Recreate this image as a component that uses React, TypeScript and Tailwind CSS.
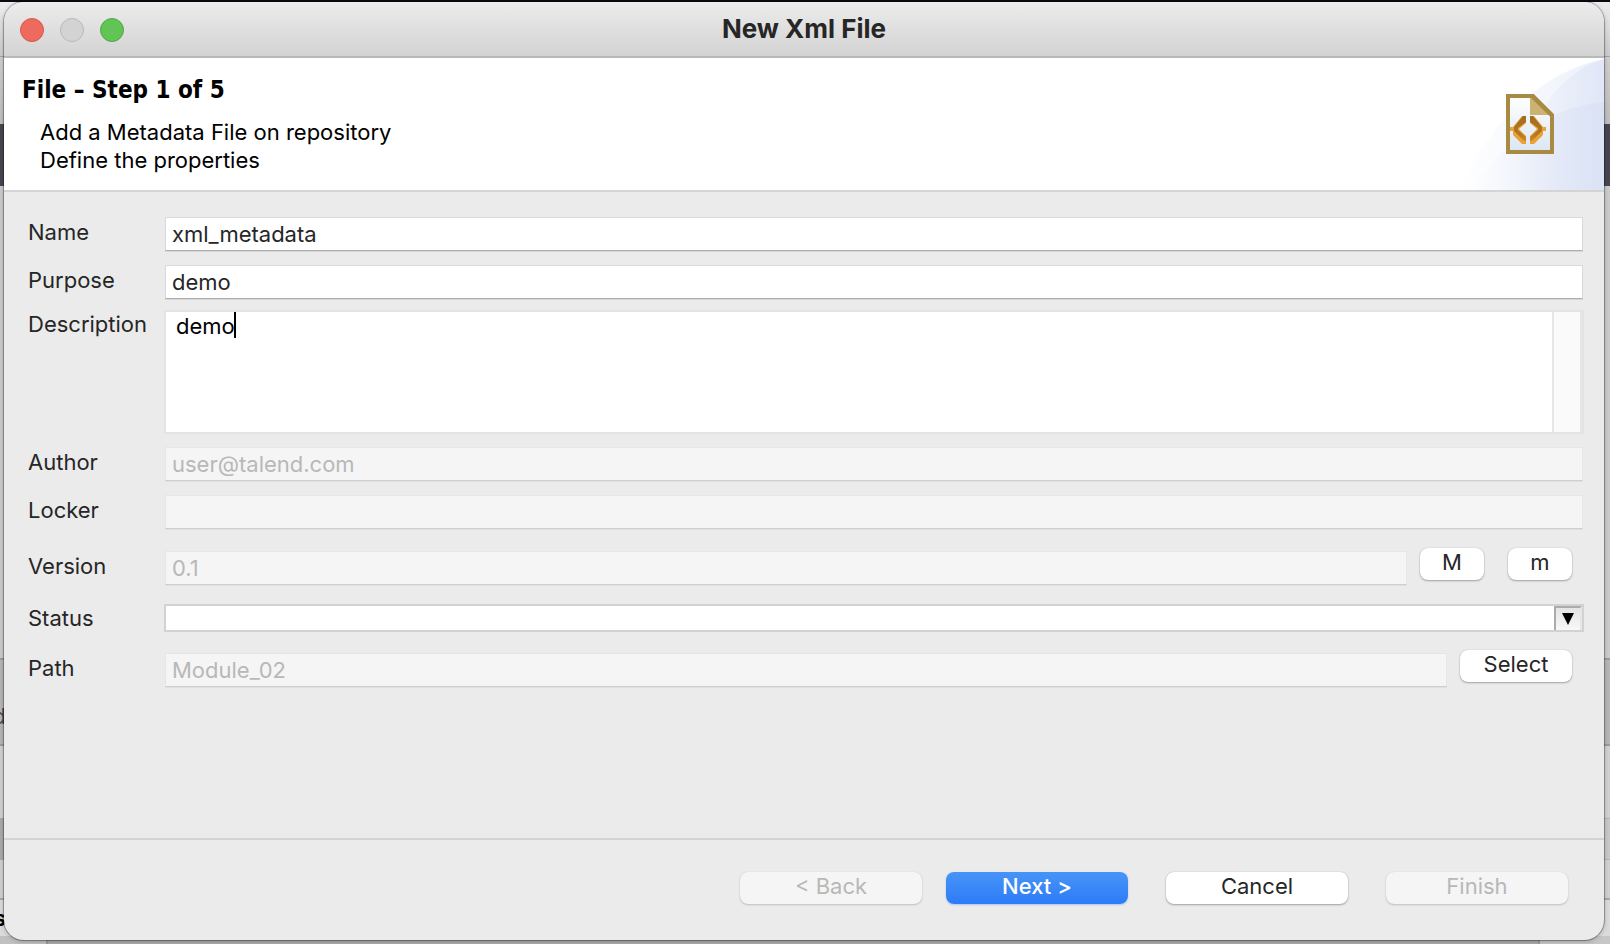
import type { ButtonHTMLAttributes, InputHTMLAttributes, ReactNode } from "react";
import { clsx } from "clsx";

type RowProps = { id: string; label: string; align?: "top" | "bottom" | "field"; className?: string; children: ReactNode };

function Row({ id, label, align = "field", className, children }: RowProps) {
  return (
    <div className={clsx("grid grid-cols-[136px_minmax(0,1fr)]", align === "top" ? "items-start" : "items-end", className)}>
      <label htmlFor={id} className={clsx("text-[22px] leading-7 text-[#262626]", align === "field" && "pb-[5px]")}>
        {label}
      </label>
      {children}
    </div>
  );
}

function TextField({ className, ...props }: InputHTMLAttributes<HTMLInputElement>) {
  return (
    <input
      type="text"
      className={clsx(
        "mx-px h-[34px] min-w-0 border border-[#d9d9d9] border-b-[#adadad] bg-white px-1.5 text-[22px] text-[#262626] shadow-[0_1px_0_#d6d6d6] outline-none",
        "disabled:border-[#e6e6e6] disabled:border-b-[#cfcfcf] disabled:bg-[#f5f5f5] disabled:text-[#b8b8b8] disabled:shadow-[0_1px_0_#e0e0e0]",
        className,
      )}
      {...props}
    />
  );
}

function Button({ primary = false, className, ...props }: ButtonHTMLAttributes<HTMLButtonElement> & { primary?: boolean }) {
  return (
    <button
      type="button"
      className={clsx(
        "h-8 shrink-0 rounded-lg pb-1 text-[22px] leading-7",
        primary
          ? "bg-linear-to-b from-[#4794f8] to-[#2d7bf6] font-medium text-white shadow-[0_1px_2px_rgba(45,123,246,0.35)]"
          : "bg-white text-[#262626] shadow-[0_1px_2px_rgba(0,0,0,0.3),0_0_1px_rgba(0,0,0,0.25)] disabled:bg-[#f5f5f5] disabled:text-[#b8b8b8] disabled:shadow-[0_1px_2px_rgba(0,0,0,0.18),0_0_1px_rgba(0,0,0,0.15)]",
        className,
      )}
      {...props}
    />
  );
}

function XmlFileIcon() {
  return (
    <svg width="48" height="60" viewBox="0 0 48 60" aria-hidden="true">
      <defs>
        <linearGradient id="sheet" x1="0" y1="0" x2="0" y2="1">
          <stop offset="0" stopColor="#fff" />
          <stop offset="1" stopColor="#dbe5f3" />
        </linearGradient>
        <linearGradient id="chevron" x1="0" y1="0" x2="0" y2="1">
          <stop offset="0" stopColor="#a06d20" />
          <stop offset="0.7" stopColor="#b4761c" />
          <stop offset="1" stopColor="#d08c22" />
        </linearGradient>
      </defs>
      <path d="M2 2H27L46 21V58H2Z" fill="url(#sheet)" stroke="#a98a43" strokeWidth="4" />
      <path d="M24 4H27L44 21H24Z" fill="#c9b272" />
      <path d="M26 2L46 21.500" stroke="#a98a43" strokeWidth="4" />
      <path
        d="M20 22V29L13 35L20 42V50H16L7 41V37H4V33H7L16 22ZM24 22V29L31 35L24 42V50H28L37 41V37H40V33H37L28 22Z"
        fill="#e9a33a"
      />
      <path d="M20 22V28L12 34V36L20 43V47H18L8 37V33L17 22ZM24 22V28L32 34V36L24 43V47H26L36 37V33L27 22Z" fill="url(#chevron)" />
    </svg>
  );
}

function HeaderSwoosh() {
  return (
    <svg className="absolute inset-y-0 right-0 h-full w-[152px]" viewBox="0 0 152 132" preserveAspectRatio="none" aria-hidden="true">
      <defs>
        <linearGradient id="outer" x1="0" y1="0" x2="1" y2="0">
          <stop offset="0" stopColor="#dfe6f6" stopOpacity="0" />
          <stop offset="1" stopColor="#dfe6f6" stopOpacity="0.6" />
        </linearGradient>
        <linearGradient id="inner" x1="0" y1="0" x2="1" y2="0">
          <stop offset="0" stopColor="#d5def4" stopOpacity="0" />
          <stop offset="1" stopColor="#d5def4" stopOpacity="0.5" />
        </linearGradient>
      </defs>
      <path d="M8 132C34 70 86 14 152 1V132Z" fill="url(#outer)" />
      <path d="M62 132C74 76 96 18 152 1V132Z" fill="url(#inner)" />
      <path d="M20 132C56 80 94 50 152 44V132Z" fill="url(#inner)" />
    </svg>
  );
}

function Backdrop() {
  return (
    <div aria-hidden="true" className="absolute inset-0 flex flex-col overflow-hidden bg-[#c9c9c9]">
      <div className="h-0.5 shrink-0 bg-[#0d0811]" />
      <div className="h-[55px] shrink-0 border-b border-[#a2a2a2] bg-linear-to-b from-[#ededed] to-[#cbcbcb]" />
      <div className="h-[67px] shrink-0 bg-linear-to-b from-[#cfcfcf] to-[#bdbdbd]" />
      <div className="h-[62px] shrink-0 bg-[#454650]" />
      <div className="h-[472px] shrink-0 bg-[#cbcbcb]" />
      <div className="flex h-[88px] shrink-0 items-center border-y-2 border-[#9b9b9b] bg-[#b5b5b5]">
        <span className="flex w-1.5 justify-end pt-7 text-[22px] leading-7 text-[#45464f]">d</span>
      </div>
      <div className="h-[72px] shrink-0 bg-[#d0d0d0]" />
      <div className="flex h-[42px] shrink-0 justify-between">
        <div className="w-2 bg-[#a9a9a9]" />
        <div className="w-2 border-y border-[#b4b4b4] bg-[#c8c8c8]" />
      </div>
      <div className="h-10 shrink-0 border-b-2 border-[#aaaaaa] bg-[#d0d0d0]" />
      <div className="flex h-9 shrink-0 items-center bg-[#dadada]">
        <span className="flex w-1.5 justify-end text-[22px] leading-7 font-bold text-black">s</span>
      </div>
      <div className="flex flex-1">
        <div className="w-12 border-r-2 border-[#999999] bg-[#c0c0c0]" />
        <div className="flex-1 bg-[#aaaaaa]" />
        <div className="w-[72px] border-l-2 border-[#999999] bg-[#c6c6c6]" />
      </div>
    </div>
  );
}

export default function App() {
  return (
    <div className="relative isolate flex min-h-screen flex-col pt-0.5 pr-1.5 pb-1 pl-1 font-['Inter',sans-serif]">
      <Backdrop />
      <main className="relative flex flex-1 flex-col overflow-hidden rounded-[20px] bg-[#ebebeb] shadow-[0_0_0_1px_rgba(0,0,0,0.25),0_1px_4px_rgba(0,0,0,0.3)]">
        <div className="grid h-14 shrink-0 grid-cols-[1fr_auto_1fr] items-center border-b-2 border-[#b9b9b9] bg-linear-to-b from-[#ececec] to-[#d3d3d3]">
          <div className="flex gap-4 pt-0.5 pl-4">
            <button type="button" aria-label="Close" className="size-6 rounded-full border border-[#d8564c] bg-[#ed6a5e]" />
            <button type="button" aria-label="Minimize" className="size-6 rounded-full border border-[#b8b8b8] bg-[#d3d3d3]" />
            <button type="button" aria-label="Zoom" className="size-6 rounded-full border border-[#4fa943] bg-[#61c454]" />
          </div>
          <h1 className="text-[26px] leading-8 font-bold text-[#262626]">New Xml File</h1>
        </div>

        <header className="relative flex shrink-0 items-start justify-between border-b-2 border-[#d4d4d4] bg-white pt-4 pr-[50px] pb-2 pl-[18px] text-black">
          <HeaderSwoosh />
          <div className="relative">
            <h2 className="font-['DejaVu_Sans_Condensed','DejaVu_Sans',sans-serif] text-2xl leading-8 font-bold">File – Step 1 of 5</h2>
            <p className="mt-3 pb-2 pl-[18px] text-[22px] leading-7">
              Add a Metadata File on repository
              <br />
              Define the properties
            </p>
          </div>
          <div className="relative mt-5">
            <XmlFileIcon />
          </div>
        </header>

        <form className="flex flex-1 flex-col pt-[25px] pr-5 pl-6">
          <Row id="name" label="Name">
            <TextField id="name" defaultValue="xml_metadata" />
          </Row>
          <Row id="purpose" label="Purpose" className="mt-3.5">
            <TextField id="purpose" defaultValue="demo" />
          </Row>
          <Row id="description" label="Description" align="top" className="mt-[11px]">
            <div className="relative flex h-[124px] border-2 border-[#e4e4e4] bg-white">
              <textarea id="description" defaultValue="demo" className="min-w-0 flex-1 resize-none bg-transparent pl-2.5 text-[22px] leading-7 text-black outline-none" />
              <span className="absolute top-0 left-[68px] h-[26px] w-0.5 bg-black" />
              <div className="w-[30px] border-x-2 border-[#e6e6e6] bg-[#fafafa]" />
            </div>
          </Row>
          <Row id="author" label="Author" className="mt-[13px]">
            <TextField id="author" defaultValue="user@talend.com" disabled />
          </Row>
          <Row id="locker" label="Locker" className="mt-3.5">
            <TextField id="locker" disabled />
          </Row>
          <Row id="version" label="Version" className="mt-[19px]">
            <div className="flex h-[37px] items-start pr-3">
              <TextField id="version" defaultValue="0.1" disabled className="flex-1 self-end" />
              <Button className="ml-3 w-16">M</Button>
              <Button className="ml-6 w-16">m</Button>
            </div>
          </Row>
          <Row id="status" label="Status" align="bottom" className="mt-[19px]">
            <div className="relative">
              <select id="status" className="block h-7 w-full appearance-none border-2 border-[#d2d2d2] bg-white text-[22px] outline-none">
                <option value="" />
              </select>
              <span className="pointer-events-none absolute inset-y-0.5 right-0.5 flex w-7 items-center justify-center border-t-2 border-r-2 border-l-2 border-t-[#ababab] border-r-[#e6e6e6] border-l-[#ababab] bg-linear-to-b from-[#e4e4e4] to-[#f8f8f8]">
                <svg width="12" height="12" viewBox="0 0 12 12" aria-hidden="true">
                  <path d="M0 0H12L6 12Z" fill="#000" />
                </svg>
              </span>
            </div>
          </Row>
          <Row id="path" label="Path" className="mt-[18px]">
            <div className="flex h-[37px] items-start pr-3">
              <TextField id="path" defaultValue="Module_02" disabled className="flex-1 self-end" />
              <Button className="ml-3 w-28">Select</Button>
            </div>
          </Row>
        </form>

        <footer className="flex shrink-0 justify-end border-t-2 border-[#d3d3d3] pt-8 pr-9 pb-9">
          <Button disabled className="w-[182px]">&lt; Back</Button>
          <Button primary className="ml-6 w-[182px]">Next &gt;</Button>
          <Button className="ml-[38px] w-[182px]">Cancel</Button>
          <Button disabled className="ml-[38px] w-[182px]">Finish</Button>
        </footer>
      </main>
    </div>
  );
}
